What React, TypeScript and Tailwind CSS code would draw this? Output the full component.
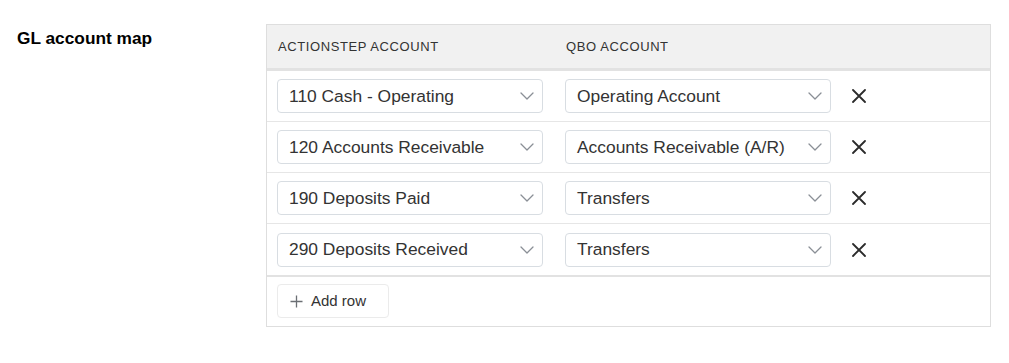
import React from "react";

const rows = [
  ["110 Cash - Operating", "Operating Account"],
  ["120 Accounts Receivable", "Accounts Receivable (A/R)"],
  ["190 Deposits Paid", "Transfers"],
  ["290 Deposits Received", "Transfers"],
];

function Chevron() {
  return (
    <svg width="14" height="8" viewBox="0 0 14 8" fill="none" className="shrink-0">
      <path d="M1 1l6 6 6-6" stroke="#8a8f96" strokeWidth="1.3" strokeLinecap="round" strokeLinejoin="round" />
    </svg>
  );
}

function Select({ value }: { value: string }) {
  return (
    <div className="flex h-[34px] w-[266px] items-center justify-between rounded-[4px] border border-[#d8dde2] bg-white pl-[11px] pr-[8px]">
      <span className="text-[17.4px] text-[#333] whitespace-nowrap">{value}</span>
      <Chevron />
    </div>
  );
}

function XIcon() {
  return (
    <svg width="14" height="14" viewBox="0 0 14 14" fill="none">
      <path d="M1 1l12 12M13 1L1 13" stroke="#2b2b2b" strokeWidth="1.8" strokeLinecap="round" />
    </svg>
  );
}

export default function App() {
  return (
    <div className="flex bg-white font-['Liberation_Sans',Arial,sans-serif] text-[#333]">
      <div className="w-[266px] shrink-0 pl-[17px] pt-[28px] text-[17.3px] font-bold leading-[20px] text-black">
        GL account map
      </div>
      <div className="mt-[24px] w-[725px] border border-[#dedede]">
        <div className="flex h-[46px] items-center border-b-[3px] border-[#e2e2e2] bg-[#f1f1f1] pl-[11px] text-[13px] tracking-[0.6px] text-[#333]">
          <span className="w-[288px]">ACTIONSTEP ACCOUNT</span>
          <span>QBO ACCOUNT</span>
        </div>
        {rows.map(([a, b], i) => (
          <div
            key={i}
            className={`flex items-center pl-[10px] ${i === rows.length - 1 ? "h-[53px] border-b-[2px] border-[#e2e2e2]" : "h-[51px] border-b border-[#e6e6e6]"}`}
          >
            <Select value={a} />
            <div className="ml-[22px]">
              <Select value={b} />
            </div>
            <button className="ml-[21px] flex h-[20px] w-[14px] items-center justify-center">
              <XIcon />
            </button>
          </div>
        ))}
        <div className="px-[10px] pb-[8px] pt-[7px]">
          <button className="flex h-[34px] w-[112px] items-center gap-[8px] rounded-[4px] border border-[#ebebeb] bg-white pl-[12px] text-[15px] text-[#333]">
            <svg width="13" height="13" viewBox="0 0 13 13" fill="none">
              <path d="M6.5 0.5v12M0.5 6.5h12" stroke="#6b6f74" strokeWidth="1.3" />
            </svg>
            <span>Add row</span>
          </button>
        </div>
      </div>
    </div>
  );
}
